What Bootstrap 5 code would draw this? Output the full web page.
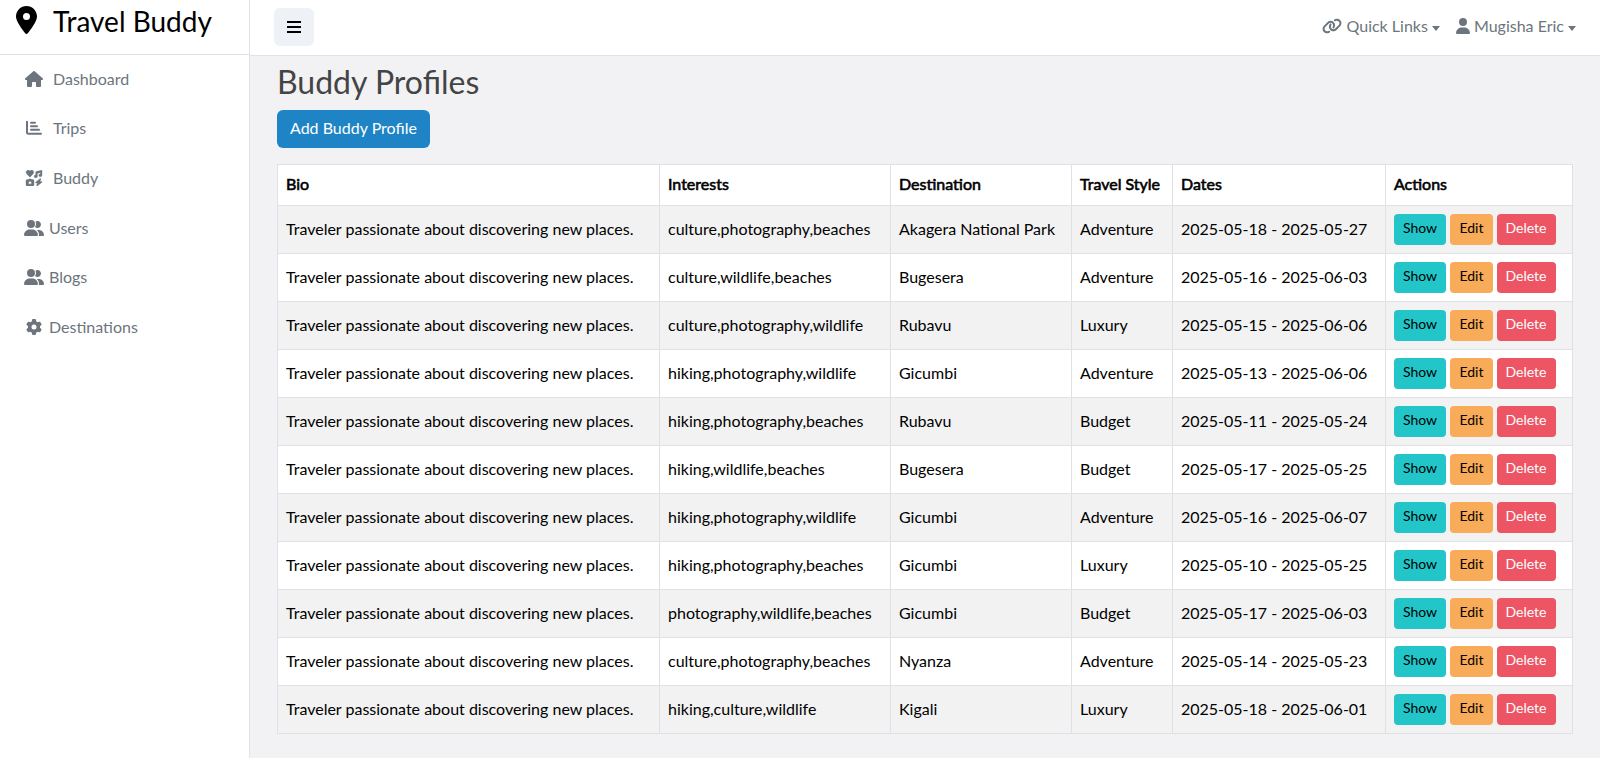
<!DOCTYPE html>
<html lang="en">
<head>
<meta charset="utf-8">
<meta name="viewport" content="width=device-width, initial-scale=1">
<title>Travel Buddy</title>
<link href="https://cdn.jsdelivr.net/npm/bootstrap@5.3.0/dist/css/bootstrap.min.css" rel="stylesheet">
<style>
body{font-family:Lato,"Carlito",sans-serif;background:#f2f2f5;color:#000;height:758px;overflow:hidden}
.side{width:250px;background:#fff;border-right:1px solid #dfe3e8}
.brand{height:55px;border-bottom:1px solid #dfe3e8;font-size:28px;line-height:42px;padding-left:16px;color:#000}
.brand svg{display:block;width:21px;height:28px;margin:6px 16px 0 0}
.side .nav-link{color:#6c757d;height:49.6px;padding:0 0 2px 24px;display:flex;align-items:center;font-size:16px}
.side .nav-link .ico{margin-right:9px}
.side .nav-link .ico-near{margin-right:5px}
.ico{width:20px;height:16px;flex:none}
.topbar{height:56px;background:#fff;border-bottom:1px solid #dfe3e8;padding:0 24px 2px;color:#6c757d}
.toggle{width:40px;height:38px;background:#eef1f6;border:0;border-radius:6px;padding:0}
.topbar .dropdown-toggle{color:#6c757d;text-decoration:none;padding-bottom:1px}
.topbar .dropdown-toggle::after{margin-left:4px;vertical-align:1px;border-top-width:5px;border-left-width:4.5px;border-right-width:4.5px}
.content-area{padding:7px 27px 0}
h1{font-size:32px;font-weight:400;color:#444;line-height:37px;margin:0 0 10px}
.btn-add{background:#1e84c6;color:#fff;height:38px;padding-top:5px}
.profiles{table-layout:fixed;width:1295px;--bs-table-striped-bg:#f2f2f2;--bs-table-striped-color:#000;--bs-table-bg:#fff;--bs-table-color:#000;border-color:#dee2e6;margin-top:16px}
.profiles td{vertical-align:middle;white-space:nowrap;height:48px;padding-top:7px;padding-bottom:9px}
.profiles td:last-child{padding-top:8px;padding-bottom:8px}
.profiles th{font-weight:400;-webkit-text-stroke:.6px #000;padding-top:7px;padding-bottom:9px}
.profiles td .btn{display:block;padding:2px 0 6px}
.b-show{background:#23c6c8;color:#000;width:52px}.b-edit{background:#f8ac59;color:#000;width:43px}.b-del{background:#ed5565;color:#fff;width:59px}
.profiles td .b-del{padding-right:1px}
</style>
</head>
<body>
<svg class="d-none">
<symbol id="group" viewBox="0 0 640 512"><path d="M96 128a128 128 0 1 1 256 0A128 128 0 1 1 96 128zM0 482.3C0 383.8 79.8 304 178.3 304h91.4C368.2 304 448 383.8 448 482.3c0 16.4-13.3 29.7-29.7 29.7H29.7C13.3 512 0 498.7 0 482.3zM609.3 512H471.4c5.4-9.4 8.6-20.3 8.6-32v-8c0-60.7-27.1-115.2-69.8-151.8c2.4-.1 4.7-.2 7.1-.2h61.4C567.8 320 640 392.2 640 481.3c0 17-13.8 30.7-30.7 30.7zM432 256c-31 0-59-12.6-79.3-32.9C372.4 196.5 384 163.6 384 128c0-26.8-6.6-52.1-18.3-74.3C384.3 40.1 407.2 32 432 32c61.9 0 112 50.1 112 112s-50.1 112-112 112z"/></symbol>
</svg>
<div class="d-flex h-100">
<aside class="side flex-shrink-0">
<div class="brand d-flex align-items-start"><svg viewBox="0 0 384 512"><path d="M215.7 499.2C267 435 384 279.4 384 192C384 86 298 0 192 0S0 86 0 192c0 87.4 117 243 168.3 307.2c12.3 15.3 35.1 15.3 47.4 0zM192 128a64 64 0 1 1 0 128 64 64 0 1 1 0-128z"/></svg>Travel Buddy</div>
<nav class="nav flex-column flex-nowrap">
<a class="nav-link" href="#"><svg class="ico" viewBox="0 0 576 512" fill="currentColor"><path d="M575.8 255.5c0 18-15 32.1-32 32.1h-32l.7 160.2c0 2.7-.2 5.4-.5 8.1V472c0 22.1-17.9 40-40 40H392c-22.1 0-40-17.9-40-40V384c0-17.700-14.300-32-32-32H256c-17.700 0-32 14.300-32 32v88c0 22.100-17.900 40-40 40H104c-22.100 0-40-17.900-40-40V287.600H32c-18 0-32-14-32-32.100c0-9 3-17 10-24L266.400 8c7-7 15-8 22-8s15 2 21 7L564.800 231.500c8 7 12 15 11 24z"/></svg>Dashboard</a>
<a class="nav-link" href="#"><svg class="ico" viewBox="0 0 512 512" fill="none" stroke="currentColor" stroke-width="64" stroke-linecap="round" stroke-linejoin="round"><path d="M32 64v336q0 48 48 48h400M160 96h128M160 208h192M160 320h256" transform="translate(0 -8)"/></svg>Trips</a>
<a class="nav-link" href="#"><svg class="ico" viewBox="0 0 512 512" fill="currentColor" stroke="currentColor" stroke-width="12"><path d="M125 228L24 124C-4 94-4 48 24 22C50-4 90-2 115 24l10 10 10-10c26-26 66-28 91-2c28 26 28 72 0 102zM500 8q12-8 12 12v150a52 44 0 1 1-52-44V76l-96 32v96a52 44 0 1 1-52-44V66q0-10 12-16zM80 304l14-20h68l14 20h40q40 0 40 40v128q0 40-40 40H40q-40 0-40-40V344q0-40 40-40zM128 356a48 48 0 1 0 0 96 48 48 0 1 0 0-96zM466 274q16 8 9 25l-28 69h50q25 8 8 28L360 508q-24 12-22-15l28-77h-50q-22-8-8-26L446 276q10-7 20-2z" fill-rule="evenodd"/></svg>Buddy</a>
<a class="nav-link" href="#"><svg class="ico ico-near" fill="currentColor"><use href="#group"/></svg>Users</a>
<a class="nav-link" href="#"><svg class="ico ico-near" fill="currentColor"><use href="#group"/></svg>Blogs</a>
<a class="nav-link" href="#"><svg class="ico ico-near" viewBox="0 0 512 512" fill="currentColor"><path d="M495.9 166.600c3.200 8.700 .5 18.400-6.400 24.600l-43.300 39.400c1.100 8.300 1.700 16.800 1.700 25.400s-.6 17.100-1.700 25.400l43.300 39.400c6.900 6.200 9.600 15.900 6.400 24.600c-4.400 11.900-9.700 23.300-15.800 34.300l-4.700 8.100c-6.600 11-14 21.400-22.100 31.200c-5.900 7.200-15.700 9.600-24.500 6.800l-55.700-17.700c-13.400 10.300-28.200 18.900-44 25.400l-12.500 57.100c-2 9.100-9 16.300-18.200 17.800c-13.800 2.300-28 3.500-42.500 3.500s-28.700-1.200-42.500-3.500c-9.200-1.500-16.200-8.700-18.200-17.800l-12.500-57.100c-15.800-6.500-30.600-15.100-44-25.400L83.100 425.900c-8.800 2.800-18.600 .3-24.500-6.800c-8.100-9.800-15.500-20.200-22.100-31.200l-4.700-8.100c-6.100-11-11.400-22.400-15.800-34.300c-3.200-8.700-.5-18.400 6.400-24.600l43.300-39.400C64.600 273.100 64 264.600 64 256s.6-17.100 1.700-25.400L22.400 191.200c-6.900-6.200-9.600-15.900-6.400-24.600c4.400-11.900 9.700-23.300 15.800-34.300l4.700-8.100c6.600-11 14-21.400 22.100-31.200c5.900-7.200 15.700-9.600 24.500-6.800l55.700 17.700c13.400-10.300 28.200-18.900 44-25.400l12.500-57.100c2-9.100 9-16.300 18.200-17.800C227.300 1.200 241.500 0 256 0s28.700 1.200 42.500 3.500c9.200 1.500 16.200 8.700 18.200 17.800l12.500 57.100c15.800 6.500 30.600 15.100 44 25.400l55.700-17.700c8.800-2.800 18.600-.3 24.500 6.800c8.100 9.800 15.500 20.200 22.100 31.200l4.700 8.100c6.100 11 11.400 22.400 15.800 34.300zM256 336a80 80 0 1 0 0-160 80 80 0 1 0 0 160z"/></svg>Destinations</a>
</nav>
</aside>
<div class="flex-grow-1">
<header class="topbar d-flex align-items-center">
<button class="btn toggle" aria-label="Menu"><svg class="d-block mx-auto" width="14" height="14" viewBox="0 0 14 14" stroke="#000" stroke-width="2"><path d="M0 2h14M0 7h14M0 12h14"/></svg></button>
<a class="dropdown-toggle ms-auto d-block" href="#"><svg width="20" height="16" viewBox="0 0 640 512" fill="currentColor" style="vertical-align:-2px"><path d="M579.800 267.700c56.500-56.500 56.500-148 0-204.500c-50-50-128.800-56.500-186.300-15.400l-1.600 1.100c-14.400 10.300-17.700 30.300-7.400 44.600s30.300 17.700 44.600 7.400l1.600-1.100c32.100-22.900 76-19.300 103.800 8.600c31.500 31.500 31.500 82.500 0 114L422.300 334.800c-31.500 31.500-82.500 31.500-114 0c-27.900-27.900-31.500-71.800-8.600-103.800l1.100-1.600c10.300-14.400 6.900-34.400-7.400-44.600s-34.400-6.900-44.600 7.400l-1.100 1.600C206.500 251.200 213 330 263 380c56.500 56.500 148 56.500 204.500 0L579.800 267.700zM60.200 244.300c-56.500 56.500-56.500 148 0 204.500c50 50 128.800 56.500 186.300 15.400l1.600-1.100c14.400-10.300 17.700-30.300 7.400-44.600s-30.300-17.700-44.600-7.400l-1.600 1.100c-32.100 22.900-76 19.300-103.800-8.600C74 372 74 321 105.500 289.500L217.700 177.200c31.500-31.500 82.500-31.500 114 0c27.900 27.900 31.500 71.800 8.600 103.900l-1.100 1.600c-10.300 14.400-6.900 34.400 7.400 44.600s34.400 6.900 44.600-7.400l1.100-1.600C433.500 260.800 427 182 377 132c-56.500-56.500-148-56.500-204.500 0L60.200 244.300z"/></svg> Quick Links</a>
<a class="dropdown-toggle d-block ms-3" href="#"><svg width="14" height="16" viewBox="0 0 448 512" fill="currentColor" style="vertical-align:-2px"><path d="M224 256A128 128 0 1 0 224 0a128 128 0 1 0 0 256zm-45.700 48C79.800 304 0 383.800 0 482.300C0 498.700 13.300 512 29.700 512H418.300c16.400 0 29.700-13.300 29.700-29.700C448 383.800 368.200 304 269.700 304H178.300z"/></svg> Mugisha Eric</a>
</header>
<main class="content-area">
<h1>Buddy Profiles</h1>
<a class="btn btn-add" href="#">Add Buddy Profile</a>
<table class="table table-bordered table-striped profiles">
<colgroup><col style="width:382px"><col style="width:231px"><col style="width:181px"><col style="width:101px"><col style="width:213px"><col style="width:187px"></colgroup>
<thead><tr><th>Bio</th><th>Interests</th><th>Destination</th><th>Travel Style</th><th>Dates</th><th>Actions</th></tr></thead>
<tbody id="rows"></tbody>
</table>
</main>
</div>
</div>
<script src="https://cdn.jsdelivr.net/npm/bootstrap@5.3.0/dist/js/bootstrap.bundle.min.js"></script>
<script>
const profiles=[
["culture,photography,beaches","Akagera National Park","Adventure","2025-05-18 - 2025-05-27"],
["culture,wildlife,beaches","Bugesera","Adventure","2025-05-16 - 2025-06-03"],
["culture,photography,wildlife","Rubavu","Luxury","2025-05-15 - 2025-06-06"],
["hiking,photography,wildlife","Gicumbi","Adventure","2025-05-13 - 2025-06-06"],
["hiking,photography,beaches","Rubavu","Budget","2025-05-11 - 2025-05-24"],
["hiking,wildlife,beaches","Bugesera","Budget","2025-05-17 - 2025-05-25"],
["hiking,photography,wildlife","Gicumbi","Adventure","2025-05-16 - 2025-06-07"],
["hiking,photography,beaches","Gicumbi","Luxury","2025-05-10 - 2025-05-25"],
["photography,wildlife,beaches","Gicumbi","Budget","2025-05-17 - 2025-06-03"],
["culture,photography,beaches","Nyanza","Adventure","2025-05-14 - 2025-05-23"],
["hiking,culture,wildlife","Kigali","Luxury","2025-05-18 - 2025-06-01"]];
document.getElementById("rows").innerHTML=profiles.map(p=>`<tr><td>Traveler passionate about discovering new places.</td>${p.map(c=>`<td>${c}</td>`).join("")}<td><div class="d-flex gap-1"><a href="#" class="btn btn-sm b-show">Show</a><a href="#" class="btn btn-sm b-edit">Edit</a><a href="#" class="btn btn-sm b-del">Delete</a></div></td></tr>`).join("");
</script>
</body>
</html>
